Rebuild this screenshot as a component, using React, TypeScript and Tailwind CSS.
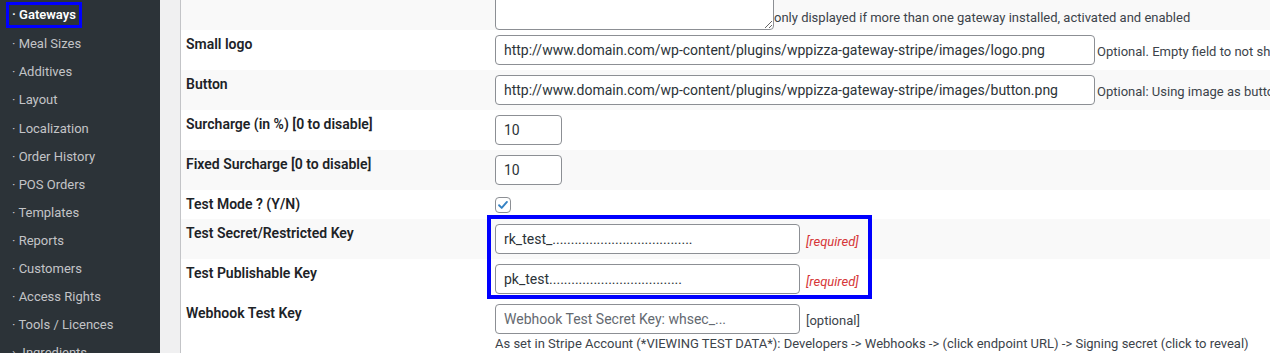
const menu = [
  'Meal Sizes',
  'Additives',
  'Layout',
  'Localization',
  'Order History',
  'POS Orders',
  'Templates',
  'Reports',
  'Customers',
  'Access Rights',
  'Tools / Licences',
];

function Sidebar() {
  return (
    <aside className="w-[160px] shrink-0 bg-[#2c3338] text-[13px] text-[#c3c4c7]">
      {/* current item, outlined */}
      <div className="ml-[6px] mt-[2px] inline-flex h-[26px] items-center border-[3px] border-[#0000ff] px-[3px] font-semibold text-white">
        · Gateways
      </div>
      <ul className="mt-[2px]">
        {menu.map(m => (
          <li key={m} className="flex h-[28.1px] items-center pl-[12px]">
            · {m}
          </li>
        ))}
        <li className="flex h-[28px] items-center pl-[12px]">›&nbsp; Ingredients</li>
      </ul>
    </aside>
  );
}

function Row({ label, gray, h = 'h-[40px]', children }: { label: string; gray?: boolean; h?: string; children: React.ReactNode }) {
  return (
    <div className={`flex ${h} ${gray ? 'bg-[#f9f9f9]' : 'bg-white'}`}>
      <div className="w-[314px] shrink-0 pl-[5px] pt-[5px] text-[14px] font-semibold leading-[18px] text-[#1d2327]">
        {label}
      </div>
      <div className="flex min-w-0 flex-1 items-start">{children}</div>
    </div>
  );
}

function Input({ value, w, placeholder }: { value?: string; w: string; placeholder?: string }) {
  return (
    <input
      readOnly
      defaultValue={value}
      placeholder={placeholder}
      className={`${w} mt-[5px] h-[30px] shrink-0 rounded-[4px] border border-[#8c8f94] bg-white px-[8px] text-[14px] text-[#2c3338] placeholder:text-[#646970] outline-none`}
    />
  );
}

export default function App() {
  return (
    <div className="flex h-[353px] w-[1270px] overflow-hidden whitespace-nowrap font-['Segoe_UI',Roboto,'Liberation_Sans',sans-serif]">
      <Sidebar />
      <div className="w-[20px] shrink-0 bg-[#f0f0f1]" />
      <main className="relative min-w-0 flex-1 border-l border-[#c3c4c7] bg-white">
        {/* top row, textarea scrolled partly out of view */}
        <div className="flex h-[30px] bg-[#f9f9f9]">
          <div className="w-[314px] shrink-0" />
          <div className="flex items-end">
            <textarea
              readOnly
              className="-mt-[40px] h-[61px] w-[279px] rounded-[4px] border border-[#8c8f94] bg-white"
            />
            <span className="mb-[3px] text-[13px] leading-[18px] text-[#3c434a]">
              only displayed if more than one gateway installed, activated and enabled
            </span>
          </div>
        </div>

        <Row label="Small logo">
          <Input w="w-[600px]" value="http://www.domain.com/wp-content/plugins/wppizza-gateway-stripe/images/logo.png" />
          <span className="ml-[2px] mt-[12px] text-[13px] text-[#3c434a]">Optional. Empty field to not show logo</span>
        </Row>
        <Row label="Button" gray>
          <Input w="w-[600px]" value="http://www.domain.com/wp-content/plugins/wppizza-gateway-stripe/images/button.png" />
          <span className="ml-[2px] mt-[12px] text-[13px] text-[#3c434a]">Optional: Using image as button</span>
        </Row>
        <Row label="Surcharge (in %) [0 to disable]">
          <Input w="w-[67px]" value="10" />
        </Row>
        <Row label="Fixed Surcharge [0 to disable]" gray>
          <Input w="w-[67px]" value="10" />
        </Row>
        <Row label="Test Mode ? (Y/N)" h="h-[29px]">
          <span className="mt-[7px] flex h-[16px] w-[16px] items-center justify-center rounded-[4px] border border-[#8c8f94] bg-white">
            <svg viewBox="0 0 16 16" className="h-[14px] w-[14px]" fill="none" stroke="#3582c4" strokeWidth="2.2" strokeLinecap="round" strokeLinejoin="round">
              <path d="M3.5 8.3l3 3 6-6.8" />
            </svg>
          </span>
        </Row>
        <Row label="Test Secret/Restricted Key" gray>
          <Input w="w-[305px]" value="rk_test_......................................" />
          <span className="ml-[6px] mt-[13px] text-[13px] italic text-[#d63638]">[required]</span>
        </Row>
        <Row label="Test Publishable Key">
          <Input w="w-[305px]" value="pk_test...................................." />
          <span className="ml-[6px] mt-[13px] text-[13px] italic text-[#d63638]">[required]</span>
        </Row>
        <Row label="Webhook Test Key" h="h-[60px]">
          <div className="flex flex-col">
            <div className="flex">
              <Input w="w-[305px]" placeholder="Webhook Test Secret Key: whsec_..." />
              <span className="ml-[6px] mt-[12px] text-[13px] text-[#3c434a]">[optional]</span>
            </div>
            <span className="mt-[1px] text-[13px] leading-[18px] text-[#3c434a]">
              As set in Stripe Account (*VIEWING TEST DATA*): Developers -&gt; Webhooks -&gt; (click endpoint URL) -&gt; Signing secret (click to reveal)
            </span>
          </div>
        </Row>

        {/* annotation box around the test keys */}
        <div className="pointer-events-none absolute left-[306px] top-[215px] h-[84px] w-[385px] border-[4px] border-[#0000ff]" />
      </main>
    </div>
  );
}
